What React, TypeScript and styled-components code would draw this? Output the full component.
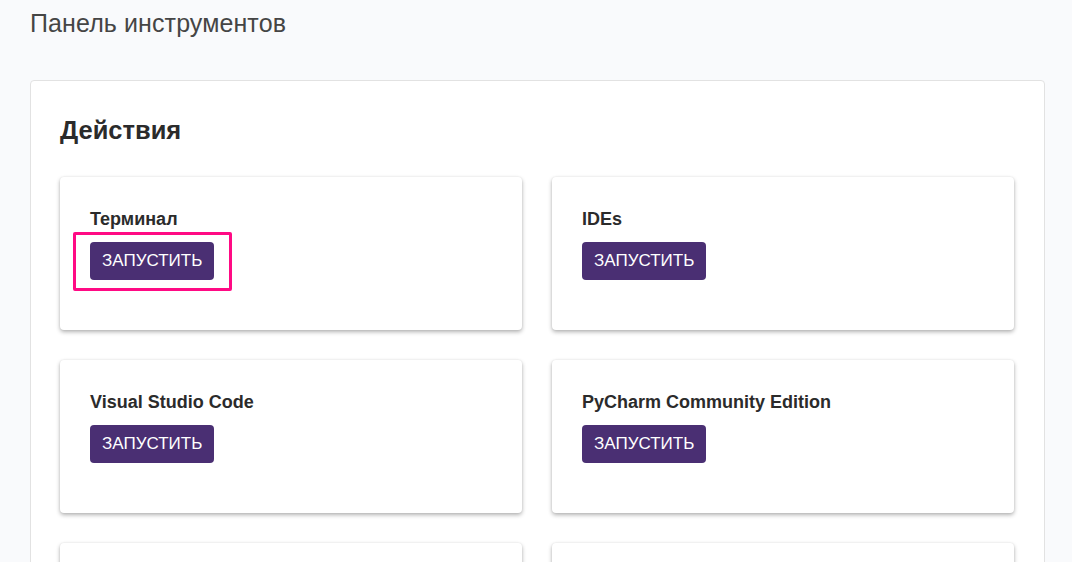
import React from 'react';
import styled, { createGlobalStyle } from 'styled-components';

const GlobalStyles = createGlobalStyle`
  html, body {
    margin: 0;
    padding: 0;
    overflow: hidden;
    background-color: #f9fafc;
    font-family: 'Liberation Sans', Arial, sans-serif;
    color: #2b2b2b;
  }
`;

const Page = styled.div`
  padding: 8px 27px 0 30px;
`;

const PageTitle = styled.h1`
  margin: 0;
  font-size: 25px;
  font-weight: 400;
  line-height: 30px;
  letter-spacing: 0.1px;
  color: #454545;
`;

const Panel = styled.section`
  margin-top: 42px;
  background: #fff;
  border: 1px solid #e2e2e2;
  border-radius: 4px;
  padding: 29px 30px 30px 29px;
`;

const SectionTitle = styled.h2`
  margin: 0 0 27px;
  font-size: 25.5px;
  font-weight: 700;
  line-height: 40px;
  color: #2b2b2b;
`;

const CardGrid = styled.div`
  display: grid;
  grid-template-columns: 1fr 1fr;
  gap: 30px;
`;

const Card = styled.div`
  background: #fff;
  border-radius: 4px;
  box-shadow: 0 2px 4px rgba(0, 0, 0, 0.3), 0 0 2px rgba(0, 0, 0, 0.08);
  padding: 31px 30px 50px;
`;

const CardTitle = styled.h3`
  margin: 0 0 12px;
  font-size: 18px;
  font-weight: 700;
  line-height: 22px;
  color: #2b2b2b;
`;

const ButtonWrap = styled.div`
  position: relative;
  display: inline-block;
`;

const LaunchButton = styled.button`
  display: block;
  height: 38px;
  padding: 0 12px;
  border: none;
  border-radius: 4px;
  background: #4a2f73;
  color: #fff;
  font-family: 'Liberation Sans', Arial, sans-serif;
  font-size: 17px;
  line-height: 38px;
  cursor: pointer;
`;

const Highlight = styled.span`
  position: absolute;
  top: -10px;
  bottom: -11px;
  left: -17px;
  right: -18px;
  border: 3px solid #ff0a84;
  border-radius: 2px;
  pointer-events: none;
`;

const tools = [
  { name: 'Терминал', highlighted: true },
  { name: 'IDEs' },
  { name: 'Visual Studio Code' },
  { name: 'PyCharm Community Edition' },
  { name: 'Jupyter Notebook' },
  { name: 'RStudio' },
];

export default function App() {
  return (
    <>
      <GlobalStyles />
      <Page>
        <PageTitle>Панель инструментов</PageTitle>
        <Panel>
          <SectionTitle>Действия</SectionTitle>
          <CardGrid>
            {tools.map((tool) => (
              <Card key={tool.name}>
                <CardTitle>{tool.name}</CardTitle>
                <ButtonWrap>
                  <LaunchButton>ЗАПУСТИТЬ</LaunchButton>
                  {tool.highlighted && <Highlight />}
                </ButtonWrap>
              </Card>
            ))}
          </CardGrid>
        </Panel>
      </Page>
    </>
  );
}
